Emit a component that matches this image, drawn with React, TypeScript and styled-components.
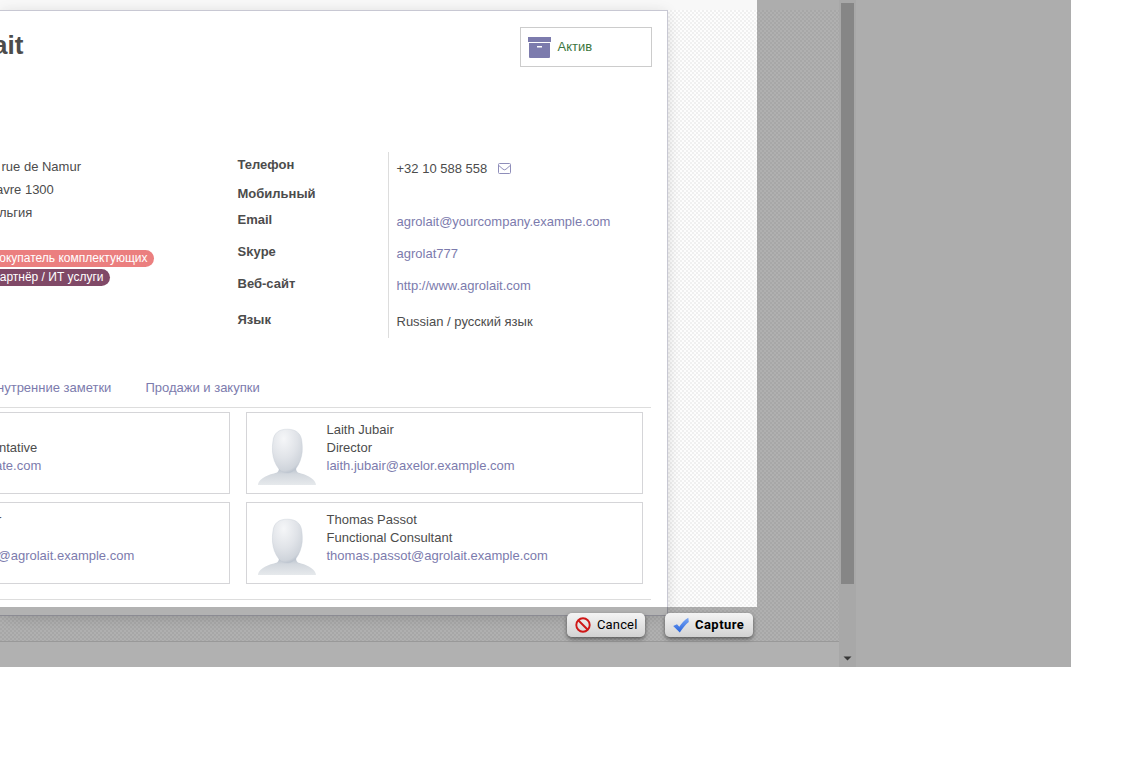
import React from 'react';
import styled, { createGlobalStyle } from 'styled-components';

const Global = createGlobalStyle`
  *, *::before, *::after { box-sizing: border-box; }
  html, body { margin: 0; background: #fff; overflow: hidden; }
  body { font: 13px/18px "Liberation Sans", Arial, sans-serif; color: #4c4c4c; }
`;

const Viewport = styled.div`
  position: relative;
  display: flex;
  width: 1071px;
  height: 667px;
  overflow: hidden;
  background: #f8f8f8;
`;

const Page = styled.div`
  display: flex;
  flex-direction: column;
  width: 839px;
  flex: none;
`;

const TopStrip = styled.div`
  height: 10px;
  flex: none;
  background: #f8f8f8;
`;

const Canvas = styled.div`
  height: 631px;
  flex: none;
  background-color: #fdfdfd;
  background-image:
    conic-gradient(#f0f0f0 25%, transparent 0 50%, #f0f0f0 0 75%, transparent 0);
  background-size: 4px 4px;
`;

const Footer = styled.div`
  flex: 1;
  border-top: 1px solid #dcdcdc;
  background: #fefefe;
`;

const Sheet = styled.main`
  display: flex;
  flex-direction: column;
  width: 668px;
  height: 606px;
  padding: 16px 15px 0 0;
  background: #fff;
  border: 1px solid #c8c8d3;
  border-left: 0;
  box-shadow: 0 5px 20px -8px rgba(0, 0, 0, 0.15), 0 0 12px rgba(0, 0, 0, 0.07);
`;

const SheetHead = styled.header`
  display: flex;
  justify-content: space-between;
  height: 125px;
  flex: none;
`;

const Title = styled.h1`
  margin: 2px 0 0 -7px;
  font-size: 26px;
  line-height: 32px;
  font-weight: bold;
`;

const StatButton = styled.div`
  display: flex;
  align-items: center;
  width: 132px;
  height: 40px;
  padding-left: 7px;
  gap: 6.5px;
  border: 1px solid #ccc;
  color: #3c763d;
  font-size: 13px;
`;

const Columns = styled.section`
  display: flex;
  height: 218px;
  flex: none;
`;

const Address = styled.div`
  width: 237.5px;
  flex: none;
  padding-top: 3px;
`;

const AddressLine = styled.div<{ $shift: number }>`
  height: 23px;
  line-height: 23px;
  margin-left: ${(p) => p.$shift}px;
  white-space: nowrap;
`;

const Tags = styled.div`
  display: flex;
  flex-direction: column;
  align-items: flex-start;
  gap: 2px;
  margin-top: 26px;
`;

const Tag = styled.span<{ $color: string; $width: number }>`
  width: ${(p) => p.$width}px;
  height: 17px;
  padding-right: 6.5px;
  display: flex;
  justify-content: flex-end;
  border-radius: 0 9px 9px 0;
  background: ${(p) => p.$color};
  color: #fff;
  font-size: 12px;
  line-height: 16px;
  white-space: nowrap;
`;

const Labels = styled.div`
  width: 151.5px;
  height: 186px;
  border-right: 1px solid #ddd;
  font-weight: bold;
  padding-top: 4px;
`;

const Values = styled.div`
  padding: 8px 0 0 7.5px;
`;

const Line = styled.div<{ $h: number; $link?: boolean }>`
  display: flex;
  align-items: flex-start;
  height: ${(p) => p.$h}px;
  white-space: nowrap;
  color: ${(p) => (p.$link ? '#7c7bad' : 'inherit')};
`;

const Tabs = styled.nav`
  display: flex;
  gap: 37px;
  width: 651px;
  height: 38px;
  flex: none;
  padding-top: 9px;
  text-indent: -3px;
  color: #7c7bad;
  border-bottom: 1px solid #ddd;
  white-space: nowrap;
`;

const Cards = styled.section`
  display: grid;
  grid-template-columns: 230px 397px;
  grid-auto-rows: 82px;
  gap: 8px 16px;
  height: 192px;
  flex: none;
  padding-top: 4px;
  border-bottom: 1px solid #ddd;
  width: 651px;
`;

const Card = styled.article<{ $cut?: boolean }>`
  display: flex;
  border: 1px solid #d5d5d8;
  border-left-width: ${(p) => (p.$cut ? 0 : 1)}px;
  padding: 8px 0 0 ${(p) => (p.$cut ? 0 : 8)}px;
`;

const CardText = styled.div`
  flex: 1;
  white-space: nowrap;
`;

const CardLine = styled.div<{ $link?: boolean; $shift?: number }>`
  height: 18px;
  margin-left: ${(p) => p.$shift ?? 0}px;
  color: ${(p) => (p.$link ? '#7c7bad' : 'inherit')};
`;

const AvatarBox = styled.div`
  width: 64px;
  height: 64px;
  margin-right: 7.5px;
  flex: none;
`;

const Scrollbar = styled.div`
  display: flex;
  flex-direction: column;
  justify-content: space-between;
  align-items: center;
  width: 17px;
  flex: none;
  padding: 3px 0 6px;
  background: #f1f1f1;
`;

const Thumb = styled.div`
  width: 13px;
  height: 581px;
  background: #c1c1c1;
`;

const Selection = styled.div`
  position: absolute;
  left: 0;
  top: 0;
  width: 757px;
  height: 607px;
  box-shadow: 0 0 0 1200px rgba(0, 0, 0, 0.3);
`;

const Actions = styled.div`
  position: absolute;
  left: 567px;
  top: 613px;
  display: flex;
  gap: 20px;
`;

const ActionButton = styled.button<{ $width: number; $bold?: boolean }>`
  display: flex;
  align-items: center;
  width: ${(p) => p.$width}px;
  height: 24px;
  padding: 0 0 1px 8px;
  gap: 6px;
  border: 0;
  border-radius: 5px;
  background: linear-gradient(#f4f4f4, #d2d2d2);
  box-shadow: 0 2px 4px rgba(0, 0, 0, 0.5);
  color: #000;
  font: ${(p) => (p.$bold ? 'bold' : 'normal')} 13px Roboto, sans-serif;
  letter-spacing: ${(p) => (p.$bold ? 0.45 : 0.15)}px;
  white-space: nowrap;
`;

const Avatar = ({ id }: { id: string }) => (
  <AvatarBox>
    <svg width="64" height="64" viewBox="0 0 64 64">
      <defs>
        <radialGradient id={`${id}-head`} cx="0.38" cy="0.22" r="0.82">
          <stop offset="0" stopColor="#f5f6f8" />
          <stop offset="0.55" stopColor="#e0e3e8" />
          <stop offset="0.88" stopColor="#cfd4db" />
          <stop offset="1" stopColor="#b4bdc9" />
        </radialGradient>
        <linearGradient id={`${id}-body`} x1="0" y1="0" x2="0" y2="1">
          <stop offset="0" stopColor="#b3bcc8" />
          <stop offset="0.4" stopColor="#d3d8de" />
          <stop offset="1" stopColor="#e6e9ec" />
        </linearGradient>
      </defs>
      <path d="M3 64C3 59 10 54.500 19 52.500C23 51.500 24 50.500 24 46H41C41 50.500 42 51.500 46 52.500C54 54.500 61 59 61 64Z" fill={`url(#${id}-body)`} />
      <path d="M32.300 8.200C40.500 8.200 46 12 46.800 20C47.300 24 47.500 27 47.200 31C46.500 37 44.500 43 41 47.500C38.500 50.500 35.500 52 32.300 52C29 52 26 50.500 23.500 47.500C20 43 18 37 17.500 31C17.200 27 17.400 24 18 20C18.800 12 24 8.200 32.300 8.200Z" fill={`url(#${id}-head)`} stroke="#c3cad3" strokeWidth="0.400" />
    </svg>
  </AvatarBox>
);

const ArchiveIcon = () => (
  <svg width="23" height="21" viewBox="0 0 23 21" fill="#7c7bad">
    <path d="M0 0H23V5H0Z" />
    <path fillRule="evenodd" d="M1 6H22V20Q22 21 21 21H2Q1 21 1 20ZM9 9V10.500H14V9Z" />
  </svg>
);

const MailSvg = styled.svg`
  margin-top: 3px;
`;

const MailIcon = () => (
  <MailSvg width="13" height="11" viewBox="0 0 13 11" fill="none" stroke="#8f8eba">
    <rect x="0.500" y="0.500" width="12" height="10" rx="1" />
    <path d="M0.800 2.500L5 6.200Q6.500 7.400 8 6.200L12.200 2.500" />
  </MailSvg>
);

const CancelIcon = () => (
  <svg width="16" height="16" viewBox="0 0 16 16" fill="none" stroke="#cf1717" strokeWidth="1.900">
    <circle cx="8" cy="8" r="6.700" />
    <path d="M3.500 3.500L12.500 12.500" />
  </svg>
);

const CheckIcon = () => (
  <svg width="16" height="16" viewBox="0 0 16 16">
    <defs>
      <linearGradient id="check" x1="0" y1="0" x2="0" y2="1">
        <stop offset="0" stopColor="#7aa7f5" />
        <stop offset="1" stopColor="#2763dc" />
      </linearGradient>
    </defs>
    <path d="M0.200 9L4 7.200L6.300 9.800C8.500 6 11.500 3 15.300 0.700L15.800 5C12.500 7.500 10 11 6.800 15.500Z" fill="url(#check)" />
  </svg>
);

const PhoneValue = styled.div`
  display: flex;
  gap: 10.5px;
`;

export default function App() {
  return (
    <>
      <Global />
      <Viewport>
        <Page>
          <TopStrip />
          <Canvas>
            <Sheet>
              <SheetHead>
                <Title>ait</Title>
                <StatButton><ArchiveIcon />Актив</StatButton>
              </SheetHead>
              <Columns>
                <Address>
                  <AddressLine $shift={1.5}>rue de Namur</AddressLine>
                  <AddressLine $shift={-4}>avre 1300</AddressLine>
                  <AddressLine $shift={-1}>льгия</AddressLine>
                  <Tags>
                    <Tag $color="#eb7f7f" $width={154}>окупатель комплектующих</Tag>
                    <Tag $color="#804967" $width={110}>артнёр / ИТ услуги</Tag>
                  </Tags>
                </Address>
                <Labels>
                  <Line $h={29}>Телефон</Line>
                  <Line $h={26}>Мобильный</Line>
                  <Line $h={32}>Email</Line>
                  <Line $h={32}>Skype</Line>
                  <Line $h={36}>Веб-сайт</Line>
                  <Line $h={18}>Язык</Line>
                </Labels>
                <Values>
                  <Line $h={53}><PhoneValue>+32 10 588 558 <MailIcon /></PhoneValue></Line>
                  <Line $h={32} $link>agrolait@yourcompany.example.com</Line>
                  <Line $h={32} $link>agrolat777</Line>
                  <Line $h={36} $link>http://www.agrolait.com</Line>
                  <Line $h={18}>Russian / русский язык</Line>
                </Values>
              </Columns>
              <Tabs>
                <span>нутренние заметки</span>
                <span>Продажи и закупки</span>
              </Tabs>
              <Cards>
                <Card $cut>
                  <CardText>
                    <CardLine />
                    <CardLine $shift={-1}>ntative</CardLine>
                    <CardLine $link $shift={-5}>ate.com</CardLine>
                  </CardText>
                </Card>
                <Card>
                  <Avatar id="laith" />
                  <CardText>
                    <CardLine>Laith Jubair</CardLine>
                    <CardLine>Director</CardLine>
                    <CardLine $link>laith.jubair@axelor.example.com</CardLine>
                  </CardText>
                </Card>
                <Card $cut>
                  <CardText>
                    <CardLine $shift={-3}>r</CardLine>
                    <CardLine />
                    <CardLine $link $shift={-2.5}>@agrolait.example.com</CardLine>
                  </CardText>
                </Card>
                <Card>
                  <Avatar id="thomas" />
                  <CardText>
                    <CardLine>Thomas Passot</CardLine>
                    <CardLine>Functional Consultant</CardLine>
                    <CardLine $link>thomas.passot@agrolait.example.com</CardLine>
                  </CardText>
                </Card>
              </Cards>
            </Sheet>
          </Canvas>
          <Footer />
        </Page>
        <Scrollbar>
          <Thumb />
          <svg width="9" height="5" viewBox="0 0 9 5"><path d="M0.500 0.500H8.500L4.500 4.500Z" fill="#505050" /></svg>
        </Scrollbar>
        <Selection />
        <Actions>
          <ActionButton $width={78}><CancelIcon />Cancel</ActionButton>
          <ActionButton $width={88} $bold><CheckIcon />Capture</ActionButton>
        </Actions>
      </Viewport>
    </>
  );
}
